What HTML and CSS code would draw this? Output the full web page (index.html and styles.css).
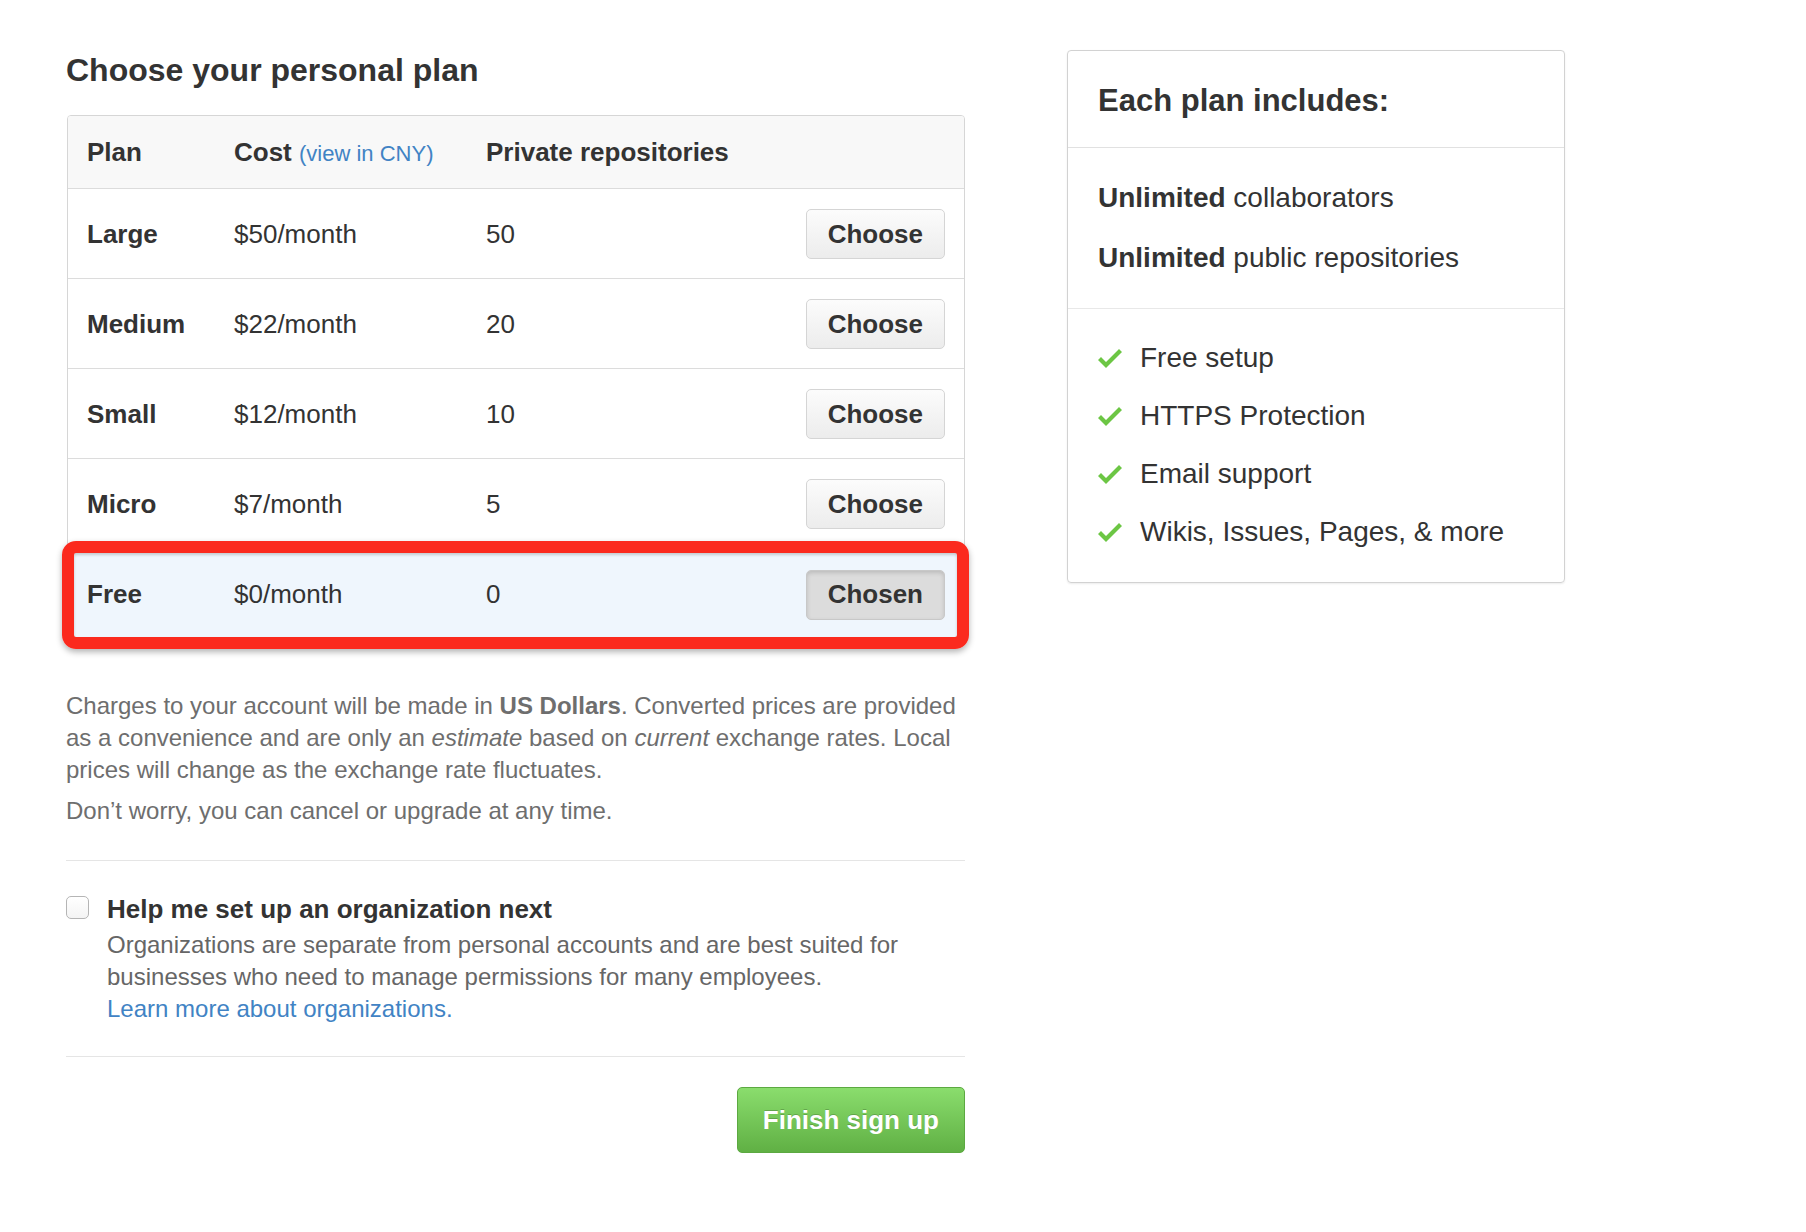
FILE: index.html
```html
<!DOCTYPE html>
<html lang="en">
<head>
<meta charset="utf-8">
<title>Choose your personal plan</title>
<link rel="stylesheet" href="styles.css">
</head>
<body>
<div class="page">
  <div class="main">
    <h2 class="title">Choose your personal plan</h2>
    <div class="plans">
      <div class="plan-row plan-head">
        <div>Plan</div>
        <div>Cost <a class="cny" href="#">(view in CNY)</a></div>
        <div>Private repositories</div>
        <div></div>
      </div>
      <div class="plan-row">
        <div class="name">Large</div><div>$50/month</div><div>50</div>
        <div><button class="btn">Choose</button></div>
      </div>
      <div class="plan-row">
        <div class="name">Medium</div><div>$22/month</div><div>20</div>
        <div><button class="btn">Choose</button></div>
      </div>
      <div class="plan-row">
        <div class="name">Small</div><div>$12/month</div><div>10</div>
        <div><button class="btn">Choose</button></div>
      </div>
      <div class="plan-row">
        <div class="name">Micro</div><div>$7/month</div><div>5</div>
        <div><button class="btn">Choose</button></div>
      </div>
      <div class="plan-row selected">
        <div class="name">Free</div><div>$0/month</div><div>0</div>
        <div><button class="btn chosen">Chosen</button></div>
        <span class="highlight"></span>
      </div>
    </div>

    <p class="note">Charges to your account will be made in <strong>US Dollars</strong>. Converted prices are provided as a convenience and are only an <em>estimate</em> based on <em>current</em> exchange rates. Local prices will change as the exchange rate fluctuates.</p>
    <p class="note note-second">Don’t worry, you can cancel or upgrade at any time.</p>

    <hr class="sep sep-first">

    <div class="org">
      <span class="checkbox"></span>
      <div class="org-body">
        <div class="org-title">Help me set up an organization next</div>
        <p class="org-desc">Organizations are separate from personal accounts and are best suited for businesses who need to manage permissions for many employees.
          <a class="org-link" href="#">Learn more about organizations.</a></p>
      </div>
    </div>

    <hr class="sep sep-second">

    <div class="actions">
      <button class="finish">Finish sign up</button>
    </div>
  </div>

  <aside class="includes">
    <div class="inc-head">Each plan includes:</div>
    <div class="inc-unl">
      <p><strong>Unlimited</strong> collaborators</p>
      <p><strong>Unlimited</strong> public repositories</p>
    </div>
    <ul class="inc-list">
      <li><svg class="check" viewBox="0 3.5 12 9.5" width="24" height="19"><path d="M12 5L4 13 0 9l1.5-1.5L4 10l6.5-6.5L12 5z"/></svg>Free setup</li>
      <li><svg class="check" viewBox="0 3.5 12 9.5" width="24" height="19"><path d="M12 5L4 13 0 9l1.5-1.5L4 10l6.5-6.5L12 5z"/></svg>HTTPS Protection</li>
      <li><svg class="check" viewBox="0 3.5 12 9.5" width="24" height="19"><path d="M12 5L4 13 0 9l1.5-1.5L4 10l6.5-6.5L12 5z"/></svg>Email support</li>
      <li><svg class="check" viewBox="0 3.5 12 9.5" width="24" height="19"><path d="M12 5L4 13 0 9l1.5-1.5L4 10l6.5-6.5L12 5z"/></svg>Wikis, Issues, Pages, &amp; more</li>
    </ul>
  </aside>
</div>
</body>
</html>
```

FILE: styles.css
```css
* { box-sizing: border-box; }

body {
  margin: 0;
  background: #fff;
  color: #333;
  font-family: "Liberation Sans", Arial, Helvetica, sans-serif;
}

.page {
  display: flex;
  align-items: flex-start;
  gap: 102px;
  padding: 50px 0 0 66px;
}

.main {
  width: 899px;
}

.title {
  margin: 0 0 25px;
  font-size: 32px;
  line-height: 40px;
  font-weight: bold;
  color: #333;
}

/* plan table */
.plans {
  width: 898px;
  margin-left: 1px;
  border: 1px solid #d6d6d6;
  border-radius: 4px;
}

.plan-row {
  position: relative;
  display: grid;
  grid-template-columns: 147px 252px 1fr auto;
  align-items: center;
  height: 90px;
  padding: 1px 19px 0;
  border-bottom: 1px solid #dcdcdc;
  font-size: 26px;
  color: #333;
}

.plan-row:last-child {
  border-bottom: 0;
}

.plan-head {
  height: 73px;
  background: #f8f8f8;
  border-radius: 3px 3px 0 0;
  font-weight: bold;
}

.cny {
  font-weight: normal;
  font-size: 22px;
  color: #4183c4;
  text-decoration: none;
}

.name {
  font-weight: bold;
}

.btn {
  height: 50px;
  padding: 0 21px;
  font-family: "Liberation Sans", Arial, Helvetica, sans-serif;
  font-size: 26px;
  font-weight: bold;
  color: #333;
  border: 1px solid #d5d5d5;
  border-radius: 5px;
  background: linear-gradient(#fcfcfc, #ececec);
}

.selected {
  background: #eff6fd;
}

.chosen {
  background: #dcdcdc;
  border-color: #c8c8c8;
  box-shadow: inset 0 2px 4px rgba(0, 0, 0, 0.15);
}

.highlight {
  position: absolute;
  top: -8px;
  left: -6px;
  right: -5px;
  bottom: -10px;
  border: 12px solid #fb2a1e;
  border-radius: 14px;
  box-shadow: 0 3px 6px rgba(0, 0, 0, 0.3), inset 0 2px 3px rgba(0, 0, 0, 0.18);
  pointer-events: none;
}

/* notes */
.note {
  margin: 50px 0 0;
  font-size: 24px;
  line-height: 32px;
  color: #6e6e6e;
}

.note-second {
  margin-top: 9px;
}

.sep {
  margin: 0;
  border: 0;
  border-top: 1px solid #e5e5e5;
}

.sep-first {
  margin-top: 33px;
}

.sep-second {
  margin-top: 31px;
}

/* organization option */
.org {
  display: flex;
  align-items: flex-start;
  gap: 18px;
  margin-top: 32px;
}

.checkbox {
  flex: none;
  width: 23px;
  height: 23px;
  margin-top: 3px;
  border: 1px solid #b5b5b5;
  border-radius: 5px;
  background: linear-gradient(#fff, #f4f4f4);
}

.org-title {
  font-size: 26px;
  line-height: 32px;
  font-weight: bold;
  color: #333;
}

.org-desc {
  margin: 4px 0 0;
  font-size: 24px;
  line-height: 32px;
  color: #666;
}

.org-link {
  display: block;
  color: #4183c4;
  text-decoration: none;
}

.actions {
  display: flex;
  justify-content: flex-end;
  margin-top: 30px;
}

.finish {
  height: 66px;
  padding: 0 25px;
  font-family: "Liberation Sans", Arial, Helvetica, sans-serif;
  font-size: 26px;
  font-weight: bold;
  color: #fff;
  text-shadow: 0 -1px 0 rgba(0, 0, 0, 0.2);
  border: 1px solid #5ca941;
  border-radius: 5px;
  background: linear-gradient(#8add6d, #60b044);
}

/* includes panel */
.includes {
  width: 498px;
  border: 1px solid #d2d2d2;
  border-radius: 4px;
  box-shadow: 0 1px 2px rgba(0, 0, 0, 0.08);
}

.inc-head {
  padding: 32px 30px 28px;
  font-size: 31px;
  line-height: 36px;
  font-weight: bold;
  color: #333;
  border-bottom: 1px solid #e1e1e1;
}

.inc-unl {
  padding: 32px 30px;
  border-bottom: 1px solid #e8e8e8;
}

.inc-unl p {
  margin: 0;
  font-size: 28px;
  line-height: 36px;
  color: #333;
}

.inc-unl p + p {
  margin-top: 24px;
}

.inc-list {
  list-style: none;
  margin: 0;
  padding: 31px 30px 32px;
}

.inc-list li {
  display: flex;
  align-items: center;
  font-size: 28px;
  line-height: 36px;
  color: #333;
}

.inc-list li + li {
  margin-top: 22px;
}

.check {
  flex: none;
  margin-right: 18px;
  fill: #6cc644;
}
```
